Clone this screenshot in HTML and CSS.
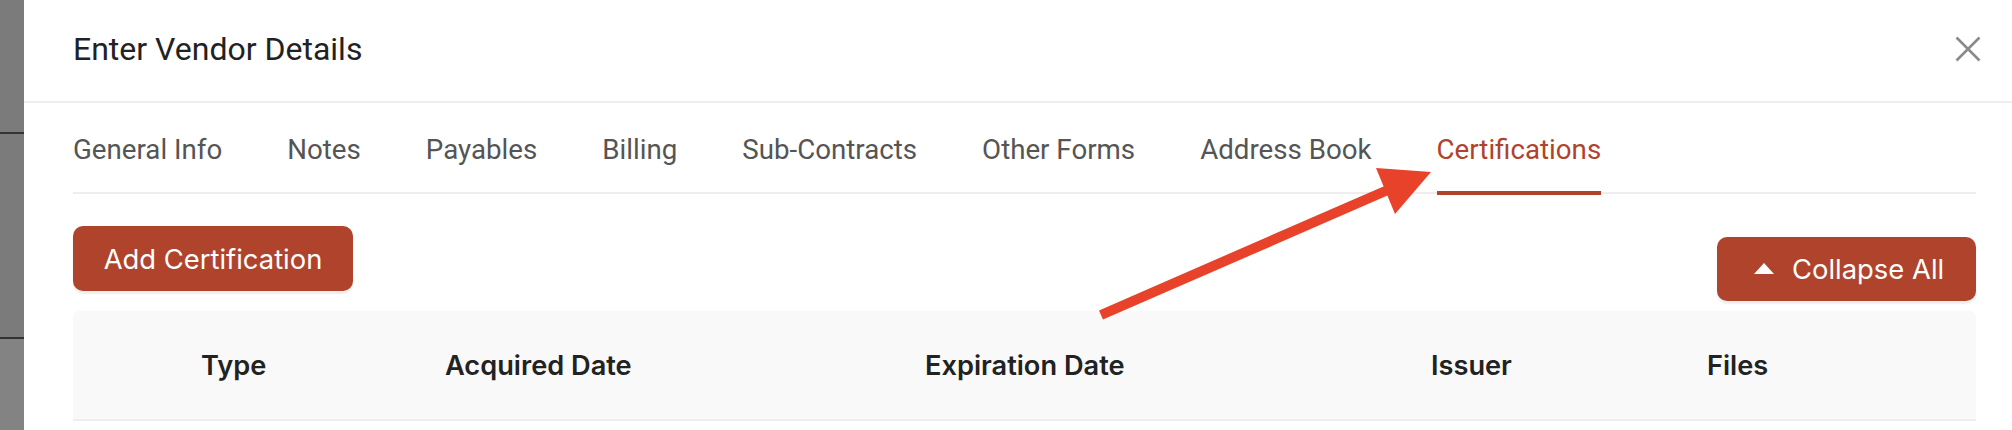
FILE: index.html
```html
<!DOCTYPE html>
<html lang="en">
<head>
<meta charset="utf-8">
<title>Enter Vendor Details</title>
<link rel="stylesheet" href="styles.css">
</head>
<body>
<div class="page">
  <div class="backdrop">
    <div class="bd-seg bd-top"></div>
    <div class="bd-line"></div>
    <div class="bd-seg bd-mid"></div>
    <div class="bd-line"></div>
    <div class="bd-seg bd-bottom"></div>
  </div>
  <div class="modal">
    <div class="modal-header">
      <h1 class="modal-title">Enter Vendor Details</h1>
      <button class="close-btn" aria-label="Close">
        <svg width="26" height="26" viewBox="0 0 26 26"><path d="M1.5 1.5 L24.5 24.5 M24.5 1.5 L1.5 24.5" stroke="#8a8a8a" stroke-width="2.6" fill="none"/></svg>
      </button>
    </div>
    <div class="modal-body">
      <nav class="tabs">
        <a class="tab">General Info</a>
        <a class="tab">Notes</a>
        <a class="tab">Payables</a>
        <a class="tab">Billing</a>
        <a class="tab">Sub-Contracts</a>
        <a class="tab">Other Forms</a>
        <a class="tab">Address Book</a>
        <a class="tab active">Certifications</a>
      </nav>
      <div class="toolbar">
        <button class="btn btn-add">Add Certification</button>
        <button class="btn btn-collapse"><span class="tri"></span>Collapse All</button>
      </div>
      <div class="table">
        <div class="thead">
          <div class="th"></div>
          <div class="th">Type</div>
          <div class="th">Acquired Date</div>
          <div class="th">Expiration Date</div>
          <div class="th">Issuer</div>
          <div class="th">Files</div>
          <div class="th"></div>
        </div>
      </div>
    </div>
  </div>
</div>
<svg class="annotation" width="2012" height="430" viewBox="0 0 2012 430">
  <line x1="1101" y1="315" x2="1390" y2="189" stroke="#e8422a" stroke-width="10"/>
  <polygon points="1431,172 1376,168 1395,214" fill="#e8422a"/>
</svg>
</body>
</html>
```

FILE: styles.css
```css
* { box-sizing: border-box; }

html, body {
  margin: 0;
  padding: 0;
}

body {
  width: 2012px;
  height: 430px;
  overflow: hidden;
  background: #7b7b7b;
  position: relative;
  font-family: Roboto, "Liberation Sans", sans-serif;
}

.page {
  display: flex;
  height: 430px;
}

.backdrop {
  width: 24px;
  flex: none;
  display: flex;
  flex-direction: column;
}
.bd-seg { background: #7b7b7b; }
.bd-top { height: 132px; }
.bd-mid { height: 203px; }
.bd-bottom { flex: 1; background: #838383; }
.bd-line { height: 2px; background: #333333; }

.modal {
  flex: 1;
  background: #ffffff;
}

.modal-header {
  height: 103px;
  border-bottom: 2px solid #eeeeee;
  display: flex;
  align-items: center;
  justify-content: space-between;
  padding: 0 31px 0 49px;
}

.modal-title {
  margin: 0;
  font-family: Roboto, sans-serif;
  font-weight: 400;
  font-size: 32px;
  color: #222222;
  padding-bottom: 4px;
}

.close-btn {
  border: 0;
  background: none;
  padding: 0;
  width: 26px;
  height: 26px;
  display: flex;
  margin-bottom: 3px;
}

.modal-body {
  padding: 0 36px 0 49px;
}

.tabs {
  display: flex;
  gap: 65px;
  border-bottom: 2px solid #eeeeee;
}

.tab {
  font-family: Roboto, sans-serif;
  font-size: 27.7px;
  line-height: 33px;
  color: #555555;
  padding: 30px 0 25px;
  border-bottom: 4px solid transparent;
  margin-bottom: -3px;
  white-space: nowrap;
}

.tab.active {
  color: #b0432b;
  border-bottom-color: #b0432b;
}

.toolbar {
  display: flex;
  justify-content: space-between;
  align-items: flex-start;
  padding-top: 32px;
}

.btn {
  border: 0;
  border-radius: 10px;
  background: #b0432b;
  color: #ffffff;
  font-family: Inter, "Noto Sans", sans-serif;
  font-size: 27.4px;
  font-weight: 400;
  display: flex;
  align-items: center;
  box-shadow: 0 3px 2px rgba(0, 0, 0, 0.07);
  white-space: nowrap;
}

.btn-add {
  height: 65px;
  width: 280px;
  justify-content: center;
}

.btn-collapse {
  height: 64px;
  width: 259px;
  margin-top: 11px;
  padding-left: 37px;
}

.tri {
  width: 0;
  height: 0;
  border-left: 10px solid transparent;
  border-right: 10px solid transparent;
  border-bottom: 11px solid #ffffff;
  margin-right: 18px;
  margin-top: -2px;
}

.table {
  margin-top: 10px;
}

.thead {
  display: grid;
  grid-template-columns: 112px 244px 480px 506px 276px 1fr 0px;
  height: 110px;
  background: #f9f9f9;
  border-radius: 6px 6px 0 0;
  border-bottom: 2px solid #eeeeee;
  align-items: center;
}

.th {
  padding-left: 16px;
  font-family: Inter, "Noto Sans", sans-serif;
  font-weight: 600;
  font-size: 27.2px;
  color: #222222;
  white-space: nowrap;
}

.th:first-child { padding-left: 0; }

.annotation {
  position: absolute;
  top: 0;
  left: 0;
  pointer-events: none;
}
```
